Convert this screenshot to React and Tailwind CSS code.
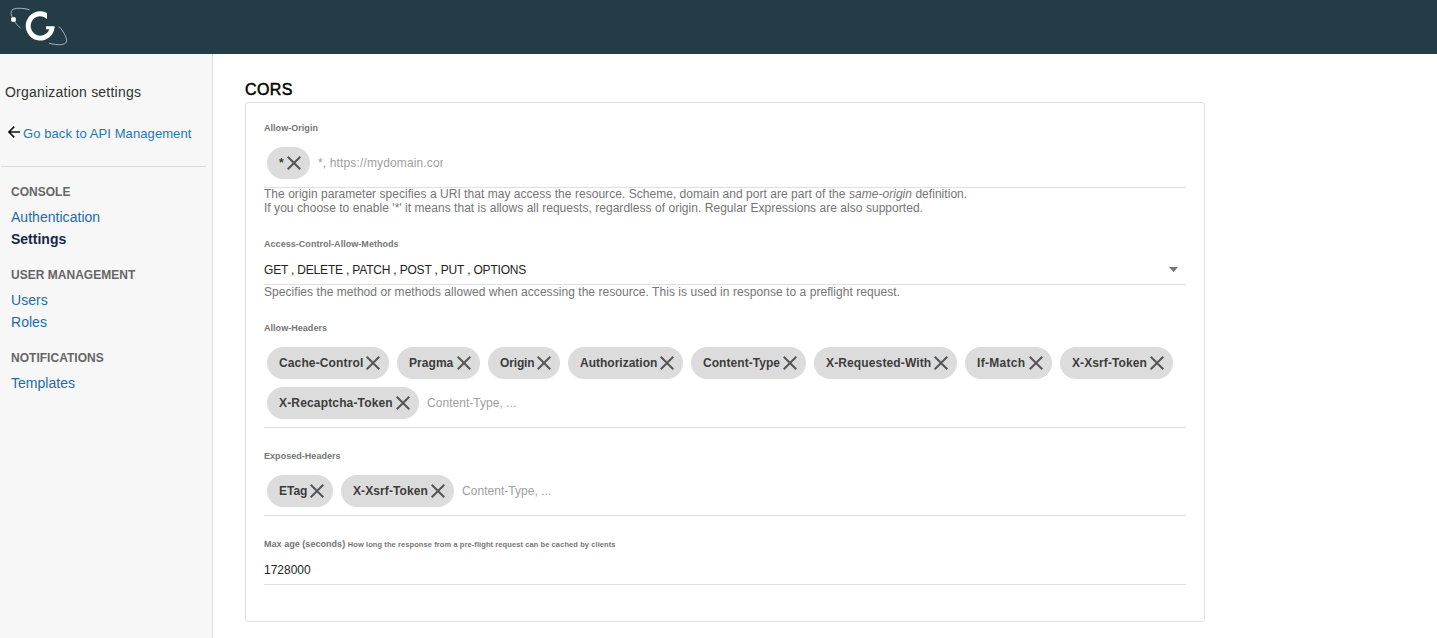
const NAV = [
  { title: "CONSOLE", items: [{ label: "Authentication" }, { label: "Settings", active: true }] },
  { title: "USER MANAGEMENT", items: [{ label: "Users" }, { label: "Roles" }] },
  { title: "NOTIFICATIONS", items: [{ label: "Templates" }] },
];

const ALLOW_HEADERS = [
  { text: "Cache-Control", width: "w-[122px] tracking-[0.13px]" },
  { text: "Pragma", width: "w-[83px] tracking-[0.05px]" },
  { text: "Origin", width: "w-[72px] tracking-[-0.15px]" },
  { text: "Authorization", width: "w-[115px] tracking-normal" },
  { text: "Content-Type", width: "w-[115px] tracking-[0.05px]" },
  { text: "X-Requested-With", width: "w-[143px] tracking-[0.13px]" },
  { text: "If-Match", width: "w-[87px] tracking-[0.3px]" },
  { text: "X-Xsrf-Token", width: "w-[113px] tracking-[0.1px]" },
  { text: "X-Recaptcha-Token", width: "w-[152px] tracking-[0.16px]" },
];

const EXPOSED_HEADERS = [
  { text: "ETag", width: "w-[66px] tracking-normal" },
  { text: "X-Xsrf-Token", width: "w-[113px] tracking-[0.1px]" },
];

function Logo() {
  return (
    <svg className="h-[54px] w-[80px]" viewBox="0 0 80 54" fill="none">
      <path d="M29.500 9.700C22 7.800 14.500 7.600 12 10.200c-1.600 1.700-1.100 4.500 1 8.500M14 20.500c1.500 2.700 3.700 5.300 6.500 7.500" stroke="#b5c1c5" strokeWidth="0.9" />
      <path d="M59 26.500c5.500 6 8.500 12.500 7.300 15.500-1.300 3.300-8.500 3.500-17.300 1.200" stroke="#b5c1c5" strokeWidth="0.9" />
      <rect x="11.200" y="17.200" width="4.600" height="4.600" rx="1.200" fill="#fff" />
      <path d="M47 12.900V19A9.600 9.700 0 1 0 49.300 29.300H46V26.300H54.700A14.500 14.700 0 1 1 47 12.900Z" fill="#fff" />
    </svg>
  );
}

function Chip({ text, width }) {
  return (
    <div className={`flex h-8 shrink-0 items-center justify-between rounded-full bg-[#dcdcdc] pr-1 pl-3 text-xs font-bold text-[#3c3c3c] ${width}`}>
      <span className="whitespace-nowrap">{text}</span>
      <svg className="-ml-3 size-6 shrink-0" viewBox="0 0 24 24" fill="#555">
        <path d="M19 6.410 17.590 5 12 10.590 6.410 5 5 6.410 10.590 12 5 17.590 6.410 19 12 13.410 17.590 19 19 17.590 13.410 12z" />
      </svg>
    </div>
  );
}

function Label({ children }) {
  return <div className="h-3.5 text-[9px] leading-[14px] font-bold tracking-[0.04px] text-[#757575]">{children}</div>;
}

function ChipField({ chips, placeholder, clip = "tracking-[0.04px]" }) {
  return (
    <div className="mt-3 flex flex-wrap gap-2 border-b border-[#dfdfdf] pb-2 pl-[3px]">
      {chips.map((c) => (
        <Chip key={c.text} {...c} />
      ))}
      <span className={`h-8 overflow-hidden text-xs leading-8 whitespace-nowrap text-[#a0a0a0] ${clip}`}>{placeholder}</span>
    </div>
  );
}

export default function App() {
  return (
    <div className="flex h-[638px] w-[1437px] flex-col overflow-hidden bg-white font-['Liberation_Sans',Arial,sans-serif]">
      <header className="h-[54px] shrink-0 bg-[#243c46]">
        <Logo />
      </header>
      <div className="flex min-h-0 flex-1">
        <aside className="w-[213px] shrink-0 border-r border-[#d9dde0] bg-[#f7f7f7] pt-[28px]">
          <div className="pl-[5px] text-sm leading-5 tracking-[0.22px] text-[#333]">Organization settings</div>
          <div className="mt-[22px] flex h-5 items-center pl-2 text-[13px] leading-5 tracking-[0.09px] text-[#1f76b5]">
            <svg className="mr-[3px] -mt-[5px] h-3 w-3" viewBox="0 0 12 12" fill="none" stroke="#111" strokeWidth="1.500">
              <path d="M12 6H1M6.300 0.600 0.900 6l5.400 5.400" />
            </svg>
            Go back to API Management
          </div>
          <div className="mt-[22px] mr-1.5 ml-px border-t border-[#d9dde0]" />
          <nav className="pt-[14px] pl-[11px]">
            {NAV.map((group) => (
              <section key={group.title} className="mb-[14px]">
                <h3 className="mb-[3px] text-xs leading-[22px] font-bold tracking-[0.02px] text-[#666]">{group.title}</h3>
                {group.items.map((item) => (
                  <div key={item.label} className={`h-[22px] text-sm leading-[22px] ${item.active ? "font-bold text-[#152849]" : "tracking-[0.03px] text-[#1d6ba8]"}`}>
                    {item.label}
                  </div>
                ))}
              </section>
            ))}
          </nav>
        </aside>
        <main className="pt-[26px] pl-8">
          <h2 className="h-[22px] text-base leading-5 tracking-[0.4px] text-black [-webkit-text-stroke:0.5px_black]">CORS</h2>
          <section className="h-[520px] w-[960px] rounded-[3px] border border-[#dfdfdf] px-[18px] pt-[18px]">
            <Label>Allow-Origin</Label>
            <ChipField chips={[{ text: "*", width: "w-[43px]" }]} placeholder="*, https://mydomain.com" clip="w-[125px] tracking-[0.14px]" />
            <p className="-mt-px mb-px text-xs leading-[14px] tracking-[0.037px] text-[#757575]">
              The origin parameter specifies a URI that may access the resource. Scheme, domain and port are part of the <em>same-origin</em> definition.
              <br />
              If you choose to enable '*' it means that is allows all requests, regardless of origin. Regular Expressions are also supported.
            </p>
            <div className="h-[21px]" />
            <Label>Access-Control-Allow-Methods</Label>
            <div className="mt-3 flex h-[22px] items-start justify-between border-b border-[#dfdfdf] pr-2 text-xs leading-[14px] tracking-[-0.19px] text-[#222]">
              <span>GET , DELETE , PATCH , POST , PUT , OPTIONS</span>
              <svg className="mt-1 h-[5px] w-[9px]" viewBox="0 0 9 5" fill="#757575">
                <path d="M0 0h9L4.500 5z" />
              </svg>
            </div>
            <p className="text-xs leading-[14px] tracking-[0.05px] text-[#757575]">
              Specifies the method or methods allowed when accessing the resource. This is used in response to a preflight request.
            </p>
            <div className="h-[22px]" />
            <Label>Allow-Headers</Label>
            <ChipField chips={ALLOW_HEADERS} placeholder="Content-Type, ..." />
            <div className="h-[21px]" />
            <Label>Exposed-Headers</Label>
            <ChipField chips={EXPOSED_HEADERS} placeholder="Content-Type, ..." />
            <div className="h-[21px]" />
            <Label>
              Max age (seconds) <span className="text-[7.500px] tracking-[0.085px]">How long the response from a pre-flight request can be cached by clients</span>
            </Label>
            <div className="mt-3 h-[22px] border-b border-[#dfdfdf] text-xs leading-[14px] text-[#222]">1728000</div>
          </section>
        </main>
      </div>
    </div>
  );
}
